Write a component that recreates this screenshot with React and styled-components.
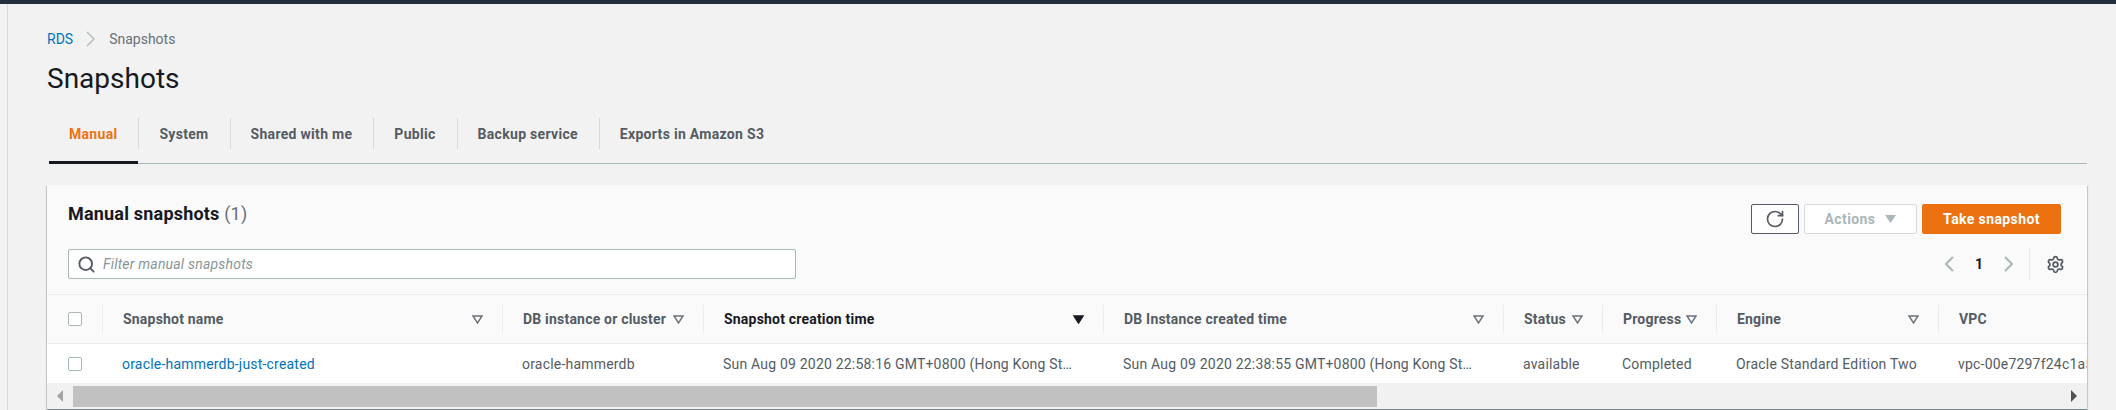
import React from "react";
import styled, { createGlobalStyle } from "styled-components";
import { Search, RotateCw, Settings } from "lucide-react";

const GlobalStyle = createGlobalStyle`
  html, body {
    margin: 0;
    padding: 0;
    background: #f2f2f2;
    overflow: hidden;
  }
  body {
    font-family: Roboto, "Liberation Sans", sans-serif;
    font-size: 14px;
    letter-spacing: 0.2px;
    color: #545b64;
  }
  * {
    box-sizing: border-box;
  }
`;

const TopBar = styled.div`
  height: 4px;
  background: #232f3e;
`;

const Shell = styled.div`
  display: flex;
  height: 406px;
`;

const SideRail = styled.div`
  width: 8px;
  flex: none;
  border-right: 1px solid #d5dbdb;
`;

const Main = styled.main`
  flex: 1;
  min-width: 0;
  padding: 25px 29px 0 39px;
`;

const Breadcrumbs = styled.nav`
  display: flex;
  align-items: center;
  height: 20px;
  letter-spacing: 0;
  color: #687078;
`;

const CrumbLink = styled.a`
  color: #0073bb;
`;

const CrumbSep = styled.svg`
  width: 10px;
  height: 16px;
  margin: 0 13px 0 13px;
  fill: none;
  stroke: #aab7b8;
  stroke-width: 1.2;
`;

const Title = styled.h1`
  margin: 12px 0 0;
  font-size: 28px;
  font-weight: 400;
  line-height: 36px;
  letter-spacing: 0;
  color: #16191f;
`;

const Tabs = styled.div`
  display: flex;
  margin: 21px 0 0 2px;
  padding-bottom: 14px;
  border-bottom: 1px solid #aab7b8;
  height: 46px;
`;

const Tab = styled.div`
  position: relative;
  display: flex;
  align-items: center;
  height: 31px;
  padding: 0 21px 0 20px;
  font-weight: 700;
  letter-spacing: 0.3px;
  color: ${({ $active }) => ($active ? "#ec7211" : "#545b64")};
  border-right: ${({ $last }) => ($last ? "none" : "1px solid #d5dbdb")};

  ${({ $active }) =>
    $active &&
    `
    &::after {
      content: "";
      position: absolute;
      left: 0;
      right: 0;
      bottom: -15px;
      height: 3px;
      background: #16191f;
    }
  `}
`;

const Card = styled.section`
  margin-top: 21px;
  height: 224px;
  background: #fff;
  overflow: hidden;
  box-shadow: 0 1px 1px 0 rgba(0, 28, 36, 0.3), 1px 1px 1px 0 rgba(0, 28, 36, 0.15),
    -1px 1px 1px 0 rgba(0, 28, 36, 0.15);
`;

const CardHeader = styled.header`
  display: flex;
  justify-content: space-between;
  height: 110px;
  padding: 19px 26px 0 21px;
  background: #fafafa;
  border-bottom: 1px solid #eaeded;
`;

const HeaderLeft = styled.div`
  width: 728px;
`;

const CardTitle = styled.h2`
  margin: 0 0 25px;
  font-size: 18px;
  font-weight: 700;
  line-height: 20px;
  color: #16191f;
`;

const Count = styled.span`
  font-weight: 400;
  color: #687078;
`;

const FilterBox = styled.div`
  display: flex;
  align-items: center;
  gap: 7px;
  height: 30px;
  padding: 0 8px;
  background: #fff;
  border: 1px solid #aab7b8;
  border-radius: 2px;
  color: #545b64;
`;

const FilterText = styled.span`
  font-style: italic;
  color: #879596;
`;

const HeaderRight = styled.div`
  display: flex;
  flex-direction: column;
  align-items: flex-end;
`;

const Actions = styled.div`
  display: flex;
  gap: 5px;
`;

const Button = styled.button`
  display: flex;
  align-items: center;
  justify-content: center;
  gap: 10px;
  height: 30px;
  width: ${({ $w }) => $w}px;
  padding: 0;
  font: 700 14px Roboto, "Liberation Sans", sans-serif;
  letter-spacing: 0.4px;
  border-radius: 2px;
  background: ${({ $primary }) => ($primary ? "#ec7211" : "#fff")};
  color: ${({ $primary, disabled }) => ($primary ? "#fff" : disabled ? "#aab7b8" : "#545b64")};
  border: 1px solid
    ${({ $primary, disabled }) => ($primary ? "#ec7211" : disabled ? "#d5dbdb" : "#545b64")};
`;

const Caret = styled.svg`
  width: 11px;
  height: 8px;
  fill: #aab7b8;
`;

const Pager = styled.div`
  display: flex;
  align-items: center;
  height: 32px;
  margin: 14px -4px 0 0;
`;

const PageChevron = styled.svg`
  width: 12px;
  height: 18px;
  fill: none;
  stroke: #aab7b8;
  stroke-width: 2;
`;

const PageNumber = styled.span`
  width: 48px;
  text-align: center;
  font-weight: 700;
  color: #16191f;
`;

const PagerDivider = styled.div`
  width: 1px;
  height: 32px;
  margin: 0 16px 0 14px;
  background: #eaeded;
`;

const TableClip = styled.div`
  overflow: hidden;
`;

const columns = "55px 400px 201px 400px 400px 99px 114px 222px 320px";

const HeadRow = styled.div`
  display: grid;
  grid-template-columns: ${columns};
  align-items: center;
  height: 49px;
  background: #fafafa;
  border-bottom: 1px solid #eaeded;
`;

const BodyRow = styled.div`
  display: grid;
  grid-template-columns: ${columns};
  align-items: center;
  height: 39px;
  background: #fff;
`;

const CheckCell = styled.div`
  padding-left: 21px;
`;

const CheckBox = styled.div`
  width: 14px;
  height: 14px;
  background: #fff;
  border: 1px solid #aab7b8;
  border-radius: 2px;
`;

const HeadCell = styled.div`
  display: flex;
  align-items: center;
  justify-content: space-between;
  height: 28px;
  padding: 0 19px 0 20px;
  font-weight: 700;
  white-space: nowrap;
  border-left: 1px solid #eaeded;
  color: ${({ $sorted }) => ($sorted ? "#16191f" : "#545b64")};
`;

const FilterMark = styled.svg`
  width: 11px;
  height: 9px;
  flex: none;
  fill: ${({ $sorted }) => ($sorted ? "#16191f" : "none")};
  stroke: ${({ $sorted }) => ($sorted ? "#16191f" : "#687078")};
  stroke-width: 1.4;
`;

const BodyCell = styled.div`
  padding: 0 ${({ $truncate }) => ($truncate ? "26px" : "0")} 0 20px;
  white-space: nowrap;
  overflow: hidden;
  text-overflow: ${({ $truncate }) => ($truncate ? "ellipsis" : "clip")};
`;

const RowLink = styled.a`
  color: #0073bb;
`;

const ScrollBar = styled.div`
  display: flex;
  align-items: center;
  height: 26px;
  background: #f1f1f1;
`;

const ScrollArrow = styled.div`
  flex: none;
  width: 26px;
  display: flex;
  justify-content: center;
`;

const ArrowGlyph = styled.svg`
  width: 6px;
  height: 12px;
  fill: ${({ $muted }) => ($muted ? "#a3a3a3" : "#505050")};
`;

const ScrollTrack = styled.div`
  flex: 1;
  height: 21px;
`;

const ScrollThumb = styled.div`
  height: 100%;
  background: #c1c1c1;
`;

const cols = [
  { label: "Snapshot name" },
  { label: "DB instance or cluster" },
  { label: "Snapshot creation time", sorted: true },
  { label: "DB Instance created time" },
  { label: "Status" },
  { label: "Progress" },
  { label: "Engine" },
  { label: "VPC", plain: true },
];

const cells = [
  { text: "oracle-hammerdb" },
  { text: "Sun Aug 09 2020 22:58:16 GMT+0800 (Hong Kong Standard Time)", truncate: true },
  { text: "Sun Aug 09 2020 22:38:55 GMT+0800 (Hong Kong Standard Time)", truncate: true },
  { text: "available" },
  { text: "Completed" },
  { text: "Oracle Standard Edition Two" },
  { text: "vpc-00e7297f24c1a5d3e" },
];

const tabs = ["Manual", "System", "Shared with me", "Public", "Backup service", "Exports in Amazon S3"];

const App = () => {
  return (
    <>
      <GlobalStyle />
      <TopBar />
      <Shell>
        <SideRail />
        <Main>
          <Breadcrumbs>
            <CrumbLink>RDS</CrumbLink>
            <CrumbSep viewBox="0 0 10 16">
              <polyline points="1,1 8,8 1,15" />
            </CrumbSep>
            Snapshots
          </Breadcrumbs>
          <Title>Snapshots</Title>
          <Tabs>
            {tabs.map((t, i) => (
              <Tab key={t} $active={i === 0} $last={i === tabs.length - 1}>
                {t}
              </Tab>
            ))}
          </Tabs>
          <Card>
            <CardHeader>
              <HeaderLeft>
                <CardTitle>
                  Manual snapshots <Count>(1)</Count>
                </CardTitle>
                <FilterBox>
                  <Search size={19} strokeWidth={2.4} />
                  <FilterText>Filter manual snapshots</FilterText>
                </FilterBox>
              </HeaderLeft>
              <HeaderRight>
                <Actions>
                  <Button $w={48}>
                    <RotateCw size={20} strokeWidth={2} />
                  </Button>
                  <Button $w={113} disabled>
                    Actions
                    <Caret viewBox="0 0 11 8">
                      <polygon points="0,0 11,0 5.5,8" />
                    </Caret>
                  </Button>
                  <Button $w={139} $primary>
                    Take snapshot
                  </Button>
                </Actions>
                <Pager>
                  <PageChevron viewBox="0 0 12 18">
                    <polyline points="10,2 3,9 10,16" />
                  </PageChevron>
                  <PageNumber>1</PageNumber>
                  <PageChevron viewBox="0 0 12 18">
                    <polyline points="2,2 9,9 2,16" />
                  </PageChevron>
                  <PagerDivider />
                  <Settings size={19} strokeWidth={2.2} />
                </Pager>
              </HeaderRight>
            </CardHeader>
            <TableClip>
              <HeadRow>
                <CheckCell>
                  <CheckBox />
                </CheckCell>
                {cols.map((c) => (
                  <HeadCell key={c.label} $sorted={c.sorted}>
                    {c.label}
                    {!c.plain && (
                      <FilterMark viewBox="0 0 11 9" $sorted={c.sorted}>
                        <polygon points="1,1 10,1 5.5,8" />
                      </FilterMark>
                    )}
                  </HeadCell>
                ))}
              </HeadRow>
              <BodyRow>
                <CheckCell>
                  <CheckBox />
                </CheckCell>
                <BodyCell>
                  <RowLink>oracle-hammerdb-just-created</RowLink>
                </BodyCell>
                {cells.map((c) => (
                  <BodyCell key={c.text} $truncate={c.truncate}>
                    {c.text}
                  </BodyCell>
                ))}
              </BodyRow>
            </TableClip>
            <ScrollBar>
              <ScrollArrow>
                <ArrowGlyph viewBox="0 0 6 12" $muted>
                  <polygon points="6,0 6,12 0,6" />
                </ArrowGlyph>
              </ScrollArrow>
              <ScrollTrack>
                <ScrollThumb style={{ width: `${(1304 / 1988) * 100}%` }} />
              </ScrollTrack>
              <ScrollArrow>
                <ArrowGlyph viewBox="0 0 6 12">
                  <polygon points="0,0 0,12 6,6" />
                </ArrowGlyph>
              </ScrollArrow>
            </ScrollBar>
          </Card>
        </Main>
      </Shell>
    </>
  );
};

export default App;
